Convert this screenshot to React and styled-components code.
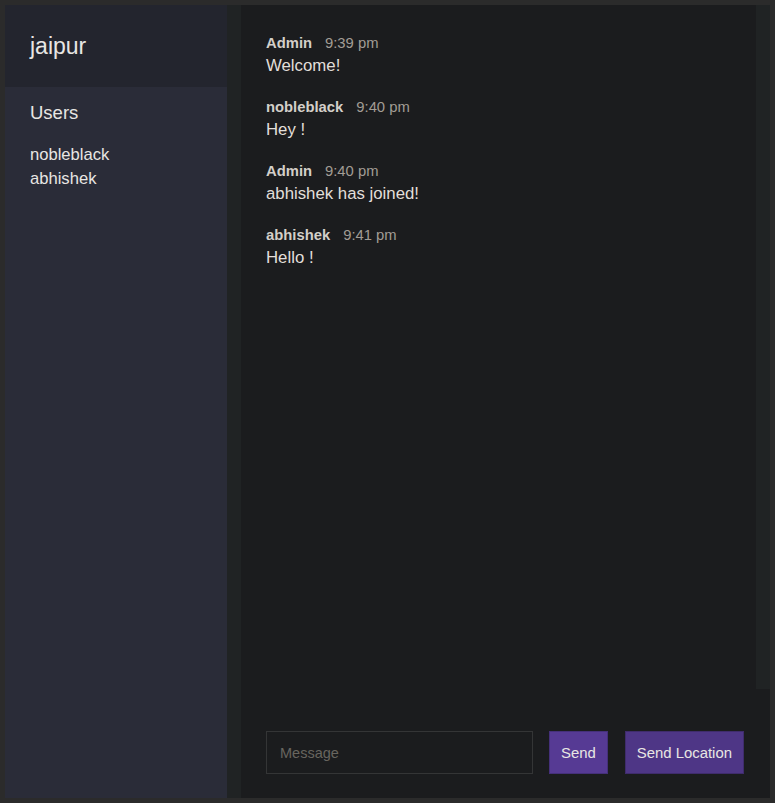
import React, { useState } from 'react';
import styled, { createGlobalStyle } from 'styled-components';

const GlobalStyle = createGlobalStyle`
  * {
    box-sizing: border-box;
  }
  html, body {
    margin: 0;
    padding: 0;
    background: #2b2b2b;
    font-family: "Liberation Sans", Arial, sans-serif;
  }
`;

const users = ['nobleblack', 'abhishek'];

const messages = [
  { name: 'Admin', time: '9:39 pm', text: 'Welcome!' },
  { name: 'nobleblack', time: '9:40 pm', text: 'Hey !' },
  { name: 'Admin', time: '9:40 pm', text: 'abhishek has joined!' },
  { name: 'abhishek', time: '9:41 pm', text: 'Hello !' },
];

const Chat = styled.div`
  display: flex;
  height: 100vh;
  padding: 5px;
  background: #2b2b2b;
`;

const Sidebar = styled.aside`
  display: flex;
  flex-shrink: 0;
  height: 100%;
`;

const SidebarPanel = styled.div`
  width: 222px;
  height: 100%;
  background: #2a2c38;
  color: #e8e6e3;
`;

// empty scrollbar track, as the browser draws it
const ScrollTrack = styled.div`
  width: 14px;
  flex-shrink: 0;
  background: #202324;
`;

const RoomTitle = styled.h2`
  margin: 0;
  height: 82px;
  display: flex;
  align-items: center;
  padding: 0 25px;
  background: #23252e;
  font-size: 23px;
  font-weight: 400;
  color: #e8e6e3;
`;

const ListTitle = styled.h3`
  margin: 0;
  padding: 15px 25px 0;
  font-size: 18.5px;
  line-height: 22px;
  font-weight: 400;
`;

const UserList = styled.ul`
  list-style: none;
  margin: 0;
  padding: 19px 25px 0;
  font-size: 16.6px;
  line-height: 24px;
`;

const Main = styled.main`
  flex: 1;
  display: flex;
  flex-direction: column;
  min-width: 0;
  background: #1b1c1e;
`;

const MessagesRow = styled.div`
  flex: 1;
  display: flex;
  min-height: 0;
`;

const Messages = styled.div`
  flex: 1;
  padding: 29px 24px 0 25px;
`;

const Message = styled.div`
  margin-bottom: 21px;
`;

const Meta = styled.p`
  margin: 0 0 3px;
  font-size: 14.8px;
  line-height: 18px;
  color: #a29d95;
`;

const Name = styled.span`
  font-weight: 700;
  color: #d3cfc9;
  margin-right: 13px;
`;

const Text = styled.p`
  margin: 0;
  font-size: 16.8px;
  line-height: 22px;
  color: #e2dfda;
`;

const Compose = styled.form`
  display: flex;
  flex-shrink: 0;
  gap: 16px;
  margin-top: 18px;
  padding: 24px 26px 24px 25px;
`;

const Input = styled.input`
  flex: 1;
  min-width: 0;
  height: 43px;
  padding: 0 13px;
  border: 1px solid #343536;
  background: #1b1c1e;
  color: #e8e6e3;
  font-family: inherit;
  font-size: 14.5px;
  outline: none;

  &::placeholder {
    color: #68655f;
  }
`;

const Button = styled.button`
  height: 43px;
  padding: 0 11px;
  border: 1px solid ${p => (p.$alt ? '#3f2c6c' : '#45307a')};
  background: ${p => (p.$alt ? '#4e3686' : '#563a94')};
  color: #e8e6e3;
  font-family: inherit;
  font-size: 14.9px;
  cursor: pointer;
  margin-left: ${p => (p.$alt ? '1px' : '0')};
`;

const App = () => {
  const [text, setText] = useState('');

  return (
    <>
      <GlobalStyle />
      <Chat>
        <Sidebar>
          <SidebarPanel>
            <RoomTitle>jaipur</RoomTitle>
            <ListTitle>Users</ListTitle>
            <UserList>
              {users.map(u => (
                <li key={u}>{u}</li>
              ))}
            </UserList>
          </SidebarPanel>
          <ScrollTrack />
        </Sidebar>
        <Main>
          <MessagesRow>
            <Messages>
              {messages.map((m, i) => (
                <Message key={i}>
                  <Meta>
                    <Name>{m.name}</Name>
                    {m.time}
                  </Meta>
                  <Text>{m.text}</Text>
                </Message>
              ))}
            </Messages>
            <ScrollTrack />
          </MessagesRow>
          <Compose onSubmit={e => e.preventDefault()}>
            <Input
              placeholder="Message"
              value={text}
              onChange={e => setText(e.target.value)}
            />
            <Button type="submit">Send</Button>
            <Button type="button" $alt>Send Location</Button>
          </Compose>
        </Main>
      </Chat>
    </>
  );
};

export default App;
